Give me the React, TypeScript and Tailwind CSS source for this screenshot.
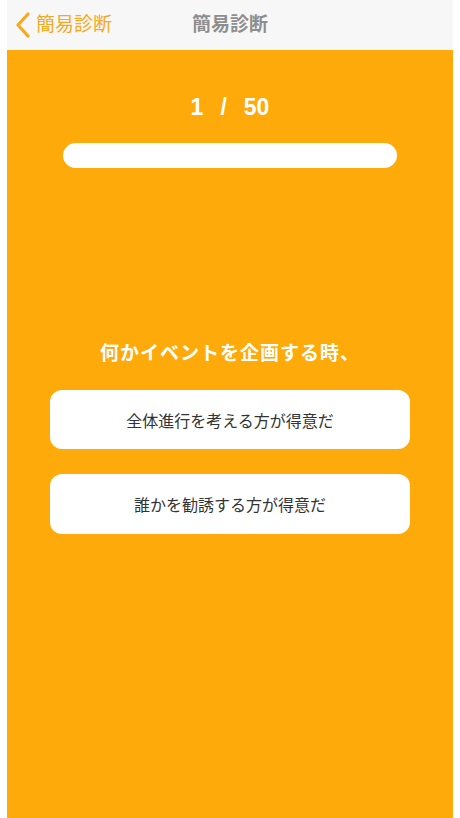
import React from 'react';

const App: React.FC = () => {
  const current = 1;
  const total = 50;

  return (
    <div
      className="h-[818px] w-full bg-white px-[7px]"
      style={{ fontFamily: '"Noto Sans CJK JP", "Noto Sans", sans-serif' }}
    >
      <div className="flex h-full flex-col">
        {/* Nav bar */}
        <div className="relative flex h-[50px] items-center bg-[#f7f7f7]">
          <div className="flex items-center pl-[8px] text-[#f6a81e]">
            <svg width="16" height="26" viewBox="0 0 16 26" fill="none">
              <path d="M13 2 L3 13 L13 24" stroke="#f6a81e" strokeWidth="3.2" strokeLinecap="round" strokeLinejoin="round" />
            </svg>
            <span className="ml-[5px] -translate-y-[3px] text-[19px] leading-none">簡易診断</span>
          </div>
          <div className="pointer-events-none absolute inset-x-0 -translate-y-[3px] text-center text-[19px] font-bold leading-none text-[#8e8e8e]">
            簡易診断
          </div>
        </div>

        {/* Body */}
        <div className="flex flex-1 flex-col bg-[#feaa0a]">
          <div
            className="mt-[43px] flex justify-center gap-[17px] text-[23px] font-bold leading-[28px] text-white"
            style={{ fontFamily: '"Liberation Sans", Arial, sans-serif' }}
          >
            <span>{current}</span>
            <span>/</span>
            <span>{total}</span>
          </div>

          <div className="mx-[56px] mt-[22px] h-[25px] rounded-full bg-white" />

          <div className="mt-[172px] text-center text-[19px] font-bold leading-[24px] tracking-[1px] text-white">
            何かイベントを企画する時、
          </div>

          <div className="mx-[43px] mt-[26px] flex flex-col gap-[25px]">
            <button className="flex h-[59px] items-center justify-center rounded-[12px] bg-white text-[16px] text-[#333333]">
              全体進行を考える方が得意だ
            </button>
            <button className="flex h-[60px] items-center justify-center rounded-[12px] bg-white text-[16px] text-[#333333]">
              誰かを勧誘する方が得意だ
            </button>
          </div>
        </div>
      </div>
    </div>
  );
};

export default App;
